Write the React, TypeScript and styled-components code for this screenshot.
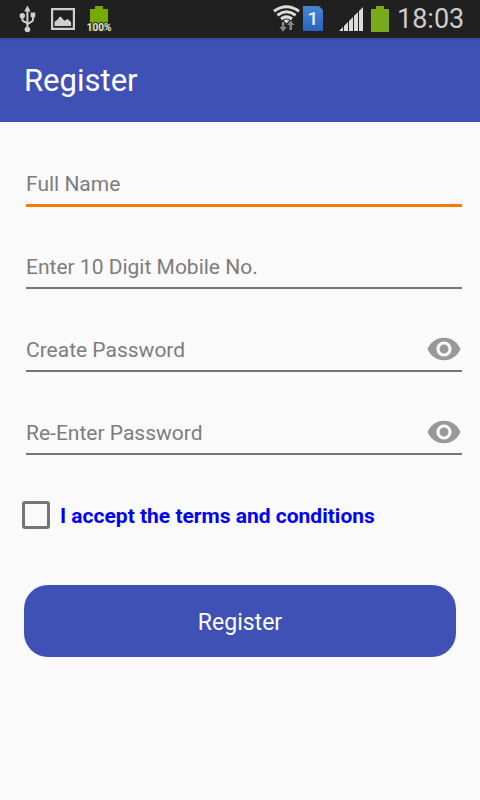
import React, { useState } from 'react';
import styled, { createGlobalStyle, css } from 'styled-components';

const GlobalStyle = createGlobalStyle`
  *, *::before, *::after { box-sizing: border-box; }
  body { margin: 0; background: #fafafa; font-family: Roboto, sans-serif; }
`;

const Screen = styled.div`
  min-height: 100vh;
  background: #fafafa;
`;

const StatusBar = styled.div`
  display: flex;
  align-items: center;
  justify-content: space-between;
  height: 38px;
  padding: 0 16px 0 18px;
  background: #202020;
  color: #cccccc;
`;

const StatusGroup = styled.div<{ $gap: number }>`
  display: flex;
  align-items: center;
  gap: ${(p) => p.$gap}px;
`;

const StatusIcon = styled.svg`
  display: block;
  flex: none;
  height: 38px;
  overflow: visible;
`;

const Clock = styled.time`
  width: 67px;
  font-size: 27px;
  line-height: 38px;
  text-align: right;
  white-space: nowrap;
`;

const ChargeLabel = styled.text`
  font: 700 10px Roboto, sans-serif;
  text-anchor: middle;
  fill: #e4e4e4;
  stroke: #26300c;
  stroke-width: 2px;
  paint-order: stroke;
`;

const SimLabel = styled.text`
  font: 500 19px Roboto, sans-serif;
  text-anchor: middle;
  fill: #e6ecf5;
`;

const AppBar = styled.header`
  display: flex;
  align-items: center;
  height: 84px;
  padding: 2px 24px 0;
  background: linear-gradient(#38489f, #3f51b5 4px);
`;

const Title = styled.h1`
  margin: 0;
  font-size: 31px;
  font-weight: 400;
  line-height: 36px;
  color: #ffffff;
`;

const Form = styled.form`
  padding: 39px 18px 24px 22px;
`;

const Field = styled.div<{ $active?: boolean }>`
  display: flex;
  align-items: center;
  height: 45px;
  margin: 0 0 38px 4px;
  padding-top: 2px;
  border-bottom: 2px solid #757575;
  ${(p) =>
    p.$active &&
    css`
      height: 46px;
      margin-bottom: 37px;
      border-bottom: 3px solid #f57c00;
    `}
`;

const Input = styled.input`
  flex: 1;
  min-width: 0;
  padding: 0;
  border: 0;
  outline: 0;
  background: transparent;
  font: 400 21px/28px Roboto, sans-serif;
  color: #212121;
  &::placeholder { color: #7d7d7d; opacity: 1; }
`;

const RevealButton = styled.button`
  display: flex;
  padding: 0 0 2px;
  border: 0;
  background: transparent;
  color: #999999;
`;

const Terms = styled.label`
  display: flex;
  align-items: center;
  gap: 10px;
  margin-top: 45px;
  font-size: 21px;
  font-weight: 700;
  line-height: 28px;
  color: #0000f5;
`;

const TermsText = styled.span`
  padding-top: 2px;
`;

const Checkbox = styled.input`
  appearance: none;
  flex: none;
  width: 28px;
  height: 28px;
  margin: 0;
  border: 3px solid #757575;
  border-radius: 3px;
  &:checked { background: #757575; }
`;

const Submit = styled.button`
  display: block;
  width: calc(100% - 8px);
  height: 72px;
  margin: 55px 6px 0 2px;
  padding: 4px 16px 0;
  border: 0;
  border-radius: 24px;
  background: #3f51b5;
  color: #ffffff;
  font: 400 23px/32px Roboto, sans-serif;
`;

const UsbIcon = () => (
  <StatusIcon width="20" viewBox="18 0 20 38" fill="#cfcfcf" aria-hidden="true">
    <path d="M27.4 5.5l3.2 6h-6.4z" />
    <circle cx="22.3" cy="15.8" r="2.7" />
    <path d="M30.7 12.6h4.6v4.6h-4.6z" />
    <circle cx="27.4" cy="29.5" r="2.8" />
    <path
      d="M27.4 10v19M22.3 17v2.2q0 1.4 1.3 2.1l2.6 1.4q1.2.7 1.2 2M33 16v3.6q0 1.4-1.3 2.1l-3 1.6q-1.3.7-1.3 2"
      fill="none"
      stroke="#cfcfcf"
      strokeWidth="2"
    />
  </StatusIcon>
);

const PictureIcon = () => (
  <StatusIcon width="26" viewBox="49 0 26 38" aria-hidden="true">
    <path d="M52.1 9.1h21.8v19.8H52.1z" fill="none" stroke="#cfcfcf" strokeWidth="2.2" />
    <path d="M54.6 26v-4.2l3-2.3 2-2.8h1.2l3.6 4 2.7-1.4h1l3 3V26z" fill="#cfcfcf" />
  </StatusIcon>
);

const ChargeIcon = () => (
  <StatusIcon width="26" viewBox="86 0 26 38" aria-hidden="true">
    <path d="M90 9h5V6h8v3h5v22H90z" fill="#75a904" />
    <ChargeLabel x="99" y="31">100%</ChargeLabel>
  </StatusIcon>
);

const WifiIcon = () => (
  <StatusIcon width="28" viewBox="272 0 28 38" aria-hidden="true">
    <g fill="none" stroke="#dcdcdc" strokeWidth="3">
      <path d="M274 11.2q12.5-9 25 0" />
      <path d="M277.4 15.2q9.1-6.8 18.2 0" />
      <path d="M281 19q5.5-4.2 11 0" />
    </g>
    <path d="M286.5 19.4q-1.8 0-2.8 1l2.8 3 2.8-3q-1-1-2.8-1z" fill="#dcdcdc" />
    <path
      d="M281.8 22h2.6v5h2.3l-3.6 4.7-3.6-4.7h2.3zM289.4 30v-5h-2.3l3.6-4.7 3.6 4.7H292v5z"
      fill="#858585"
    />
  </StatusIcon>
);

const SimIcon = () => (
  <StatusIcon width="20" viewBox="303 0 20 38" aria-hidden="true">
    <defs>
      <linearGradient id="sim" x1="0" y1="0" x2="0" y2="1">
        <stop offset="0" stopColor="#4488d0" />
        <stop offset="1" stopColor="#2c61bd" />
      </linearGradient>
    </defs>
    <path d="M303 6h16l4 4v21h-20z" fill="url(#sim)" />
    <SimLabel x="313" y="25">1</SimLabel>
  </StatusIcon>
);

const SignalIcon = () => (
  <StatusIcon width="32" viewBox="331 0 32 38" fill="#dcdcdc" aria-hidden="true">
    <path d="M339 31l4-4v4zM344 26l4-4v9h-4zM349 21l4-4v14h-4zM354 16l4-4v19h-4zM359 11l4-4v24h-4z" />
  </StatusIcon>
);

const BatteryIcon = () => (
  <StatusIcon width="18" viewBox="371 0 18 38" aria-hidden="true">
    <path d="M371 9h5V6h8v3h5v23h-18z" fill="#78aa1c" />
  </StatusIcon>
);

const EyeIcon = () => (
  <svg width="36" height="36" viewBox="0 0 24 24" fill="currentColor" aria-hidden="true">
    <path d="M12 4.5C7 4.5 2.73 7.61 1 12c1.73 4.39 6 7.5 11 7.5s9.27-3.11 11-7.5c-1.73-4.39-6-7.5-11-7.5zM12 17c-2.76 0-5-2.24-5-5s2.24-5 5-5 5 2.24 5 5-2.24 5-5 5zm0-8c-1.66 0-3 1.34-3 3s1.34 3 3 3 3-1.34 3-3-1.34-3-3-3z" />
  </svg>
);

const PasswordField = ({ label }: { label: string }) => {
  const [visible, setVisible] = useState(false);
  return (
    <Field>
      <Input type={visible ? 'text' : 'password'} aria-label={label} placeholder={label} />
      <RevealButton type="button" aria-label="Show password" onClick={() => setVisible(!visible)}>
        <EyeIcon />
      </RevealButton>
    </Field>
  );
};

export default function App() {
  return (
    <Screen>
      <GlobalStyle />
      <StatusBar>
        <StatusGroup $gap={11}>
          <UsbIcon />
          <PictureIcon />
          <ChargeIcon />
        </StatusGroup>
        <StatusGroup $gap={8}>
          <StatusGroup $gap={3}>
            <WifiIcon />
            <SimIcon />
          </StatusGroup>
          <SignalIcon />
          <BatteryIcon />
          <Clock>18:03</Clock>
        </StatusGroup>
      </StatusBar>
      <AppBar>
        <Title>Register</Title>
      </AppBar>
      <Form onSubmit={(e) => e.preventDefault()}>
        <Field $active>
          <Input type="text" aria-label="Full Name" placeholder="Full Name" />
        </Field>
        <Field>
          <Input type="tel" aria-label="Enter 10 Digit Mobile No." placeholder="Enter 10 Digit Mobile No." />
        </Field>
        <PasswordField label="Create Password" />
        <PasswordField label="Re-Enter Password" />
        <Terms>
          <Checkbox type="checkbox" />
          <TermsText>I accept the terms and conditions</TermsText>
        </Terms>
        <Submit type="submit">Register</Submit>
      </Form>
    </Screen>
  );
}
